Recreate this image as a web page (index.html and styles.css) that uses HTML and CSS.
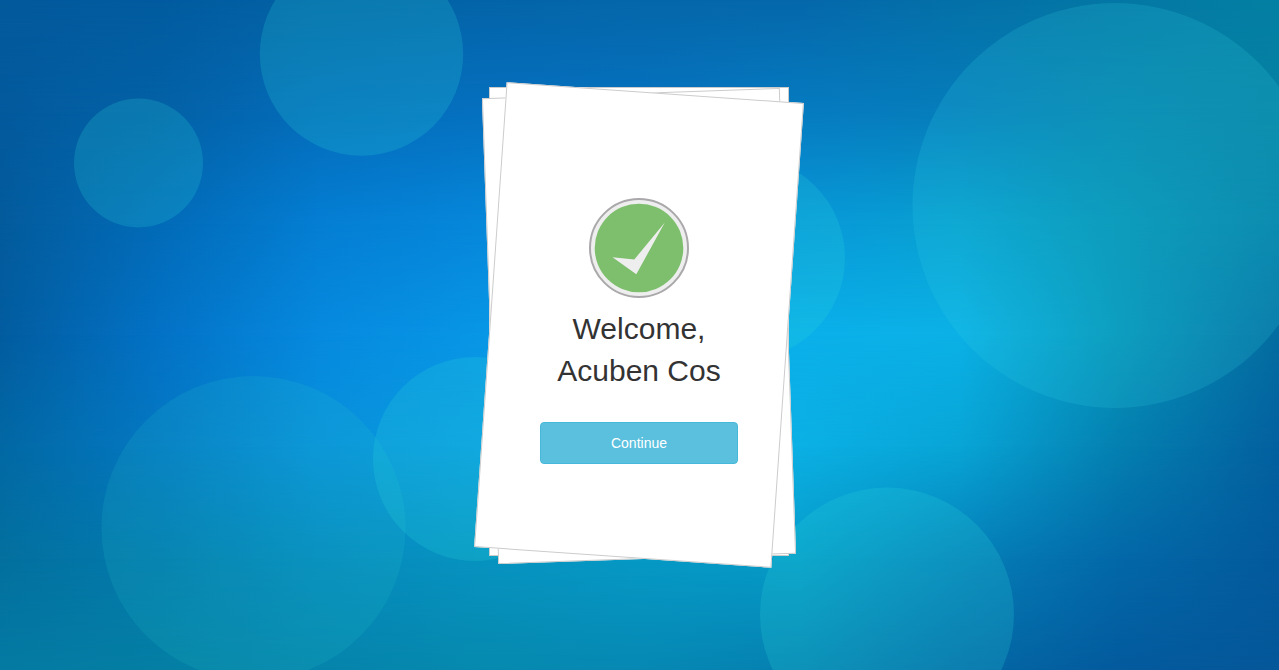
FILE: index.html
```html
<!DOCTYPE html>
<html lang="en">
<head>
<meta charset="utf-8">
<title>Welcome</title>
<link rel="stylesheet" href="styles.css">
</head>
<body>
<div class="backdrop" aria-hidden="true">
  <div class="wash wash-1"></div>
  <div class="wash wash-2"></div>
  <div class="wash wash-3"></div>
  <div class="wash wash-4"></div>
  <div class="wash wash-5"></div>
  <div class="wash wash-6"></div>
  <div class="wash wash-7"></div>
  <svg class="bubbles" width="1279" height="670" viewBox="0 0 1279 670">
    <circle cx="138.5" cy="163" r="64.5"/>
    <circle cx="361.5" cy="54" r="101.7"/>
    <circle class="faint" cx="253.5" cy="528" r="152"/>
    <circle cx="475" cy="459" r="102"/>
    <circle cx="743" cy="258" r="102"/>
    <circle cx="887" cy="614.5" r="127"/>
    <circle class="cool" cx="1115" cy="205.5" r="202.5"/>
  </svg>
</div>
<main class="stage">
  <section class="card">
    <div class="content">
      <svg class="badge" width="100" height="100" viewBox="0 0 100 100" aria-hidden="true">
        <circle cx="50" cy="50" r="49" fill="#eee" stroke="#aaa8aa" stroke-width="2"/>
        <circle cx="50" cy="50" r="44.3" fill="#7dbf6c"/>
        <path d="M23.5 59.2 L45.3 61.5 L75.8 24.5 L47.3 76.3 Z" fill="#eee"/>
      </svg>
      <h1 class="greeting">Welcome,<br>Acuben Cos</h1>
      <button class="continue" type="button">Continue</button>
    </div>
  </section>
</main>
</body>
</html>
```

FILE: styles.css
```css
* { box-sizing: border-box; }

body {
  margin: 0;
  height: 670px;
  overflow: hidden;
  font-family: "Liberation Sans", Arial, sans-serif;
  color: #333;
}

.backdrop {
  position: absolute;
  inset: 0;
  z-index: -1;
  overflow: hidden;
  background: #0568ab;
}

/* Horizontal colour bands that fade into each other from top to bottom */
.wash { position: absolute; inset: 0; }
.wash-1 { background: linear-gradient(90deg, #035a9c, #025b9f, #0362a4, #0464a9, #0567aa, #0568ab, #0471a8, #0477a5, #0480a3); }
.wash-2 {
  background: linear-gradient(90deg, #035a9d, #0361a6, #046cba, #0570bf, #0672c0, #067bc0, #067dbb, #0684ae, #0580a3);
  mask-image: linear-gradient(transparent 0, #000 16.67%);
}
.wash-3 {
  background: linear-gradient(90deg, #035b9c, #026bb8, #047ed3, #0687da, #088bdc, #0899da, #08a0d0, #0691b4, #047da5);
  mask-image: linear-gradient(transparent 16.67%, #000 33.33%);
}
.wash-4 {
  background: linear-gradient(90deg, #025c9f, #0372c6, #068adf, #0896e6, #0aa5ea, #0ab0ea, #0bb1e6, #0693b8, #046ca0);
  mask-image: linear-gradient(transparent 33.33%, #000 50%);
}
.wash-5 {
  background: linear-gradient(90deg, #0268a4, #0478c2, #0890da, #0a9ce0, #0aa8e4, #0bb0e4, #08a5d6, #0480b0, #03609f);
  mask-image: linear-gradient(transparent 50%, #000 66.67%);
}
.wash-6 {
  background: linear-gradient(90deg, #03709f, #037aad, #0589bd, #0793c0, #0699c5, #069bc8, #0580b8, #0368a8, #035a9c);
  mask-image: linear-gradient(transparent 66.67%, #000 83.33%);
}
.wash-7 {
  background: linear-gradient(90deg, #047aa2, #047ea3, #0584ab, #0689ae, #0688b3, #0580b0, #0468a5, #035a9d, #045799);
  mask-image: linear-gradient(transparent 83.33%, #000 100%);
}

.bubbles { position: absolute; left: 0; top: 0; fill: rgba(44, 220, 222, .2); }
.bubbles .faint { fill: rgba(44, 205, 205, .14); }
.bubbles .cool { fill: rgba(48, 208, 228, .18); }

.stage {
  display: flex;
  justify-content: center;
  padding: 87px 1px 0 0;
}

/* Card with two tilted sheets of paper over it */
.card {
  position: relative;
  isolation: isolate;
  width: 300px;
  height: 469px;
  background: #fff;
  border: 1px solid #ccc;
}
.card::before,
.card::after {
  content: "";
  position: absolute;
  left: 0;
  top: 5px;
  z-index: -1;
  width: 296px;
  height: 464px;
  background: #fff;
  border: 1px solid #ccc;
}
.card::before { transform: rotate(-2deg); }
.card::after { top: 4px; transform: rotate(4deg); }

.content {
  display: flex;
  flex-direction: column;
  align-items: center;
  padding: 110px 50px 0;
}

.badge { display: block; }

.greeting {
  margin: 10px 0 0;
  font-size: 30px;
  font-weight: 400;
  line-height: 42px;
  text-align: center;
  white-space: nowrap;
}

.continue {
  width: 198px;
  height: 42px;
  margin-top: 30px;
  padding: 0;
  border: 1px solid #46b8da;
  border-radius: 4px;
  background: #5bc0de;
  color: #fff;
  font: 14px/20px "Liberation Sans", Arial, sans-serif;
}
```
